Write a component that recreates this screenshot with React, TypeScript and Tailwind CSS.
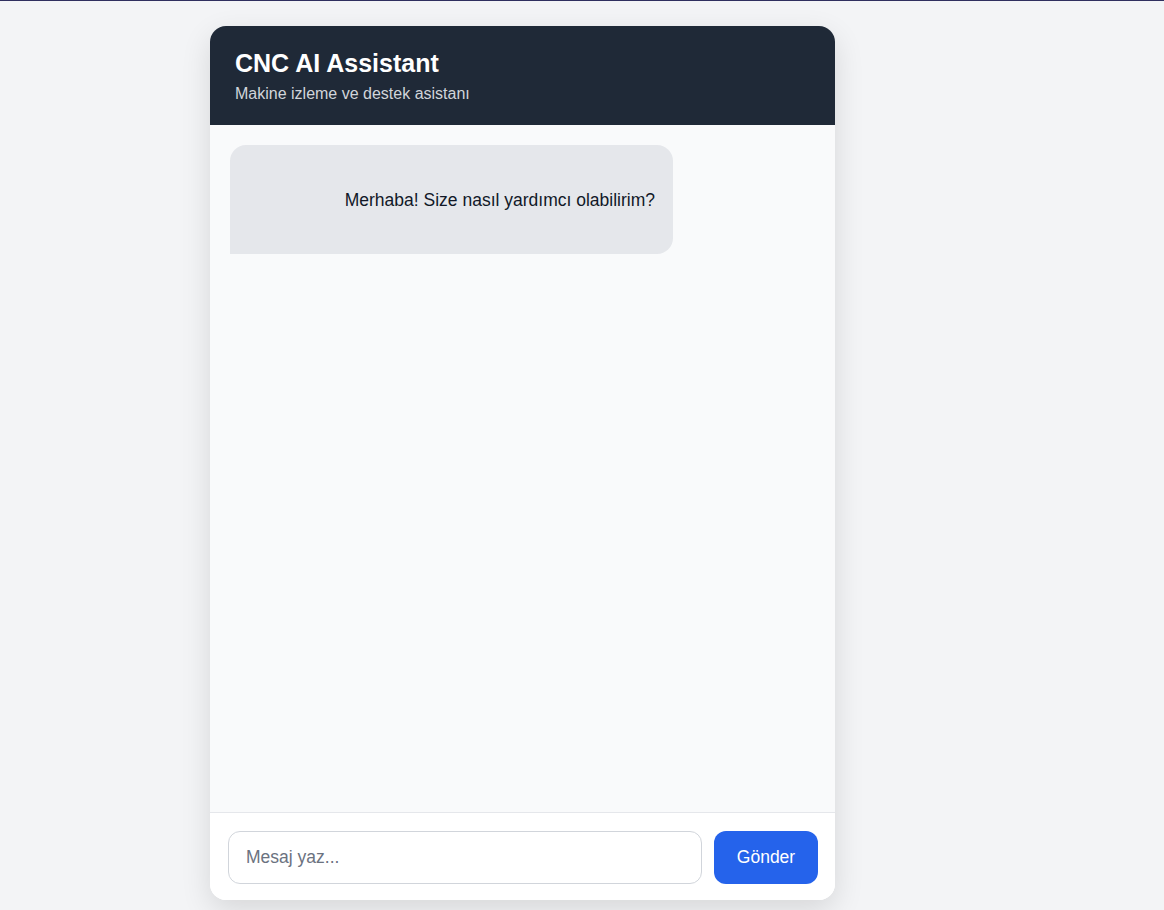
export default function App() {
  return (
    <div
      className="h-[910px] w-full overflow-hidden border-t border-[#2f2f5f] bg-[#f3f4f6] pl-[210px] pt-[25px]"
      style={{ fontFamily: '"Liberation Sans", Arial, sans-serif' }}
    >
      <div className="flex h-[874px] w-[625px] flex-col overflow-hidden rounded-2xl bg-white shadow-[0_10px_30px_rgba(0,0,0,0.12)]">
        <div className="flex h-[99px] flex-col justify-center bg-[#1f2937] px-[25px]">
          <h1 className="text-[25px] font-bold leading-[30px] text-white">CNC AI Assistant</h1>
          <p className="mt-[6px] text-[16px] leading-[20px] text-[#d1d5db]">Makine izleme ve destek asistanı</p>
        </div>

        <div className="flex-1 bg-[#f9fafb] px-5 pt-5">
          <div className="flex h-[109px] w-[443px] items-center justify-end rounded-2xl rounded-bl-none bg-[#e5e7eb] px-[18px]">
            <span className="text-[17.5px] leading-[22px] text-[#111827]">
              Merhaba! Size nasıl yardımcı olabilirim?
            </span>
          </div>
        </div>

        <div className="flex h-[88px] items-center gap-3 border-t border-[#e5e7eb] bg-white pl-[18px] pr-[17px] pt-[2px]">
          <input
            type="text"
            placeholder="Mesaj yaz..."
            className="h-[53px] flex-1 rounded-xl border border-[#d1d5db] bg-white px-[17px] text-[17.5px] text-[#111827] outline-none placeholder:text-[#6b7280]"
          />
          <button className="h-[53px] w-[104px] rounded-xl bg-[#2563eb] text-[17.5px] text-white">
            Gönder
          </button>
        </div>
      </div>
    </div>
  );
}
